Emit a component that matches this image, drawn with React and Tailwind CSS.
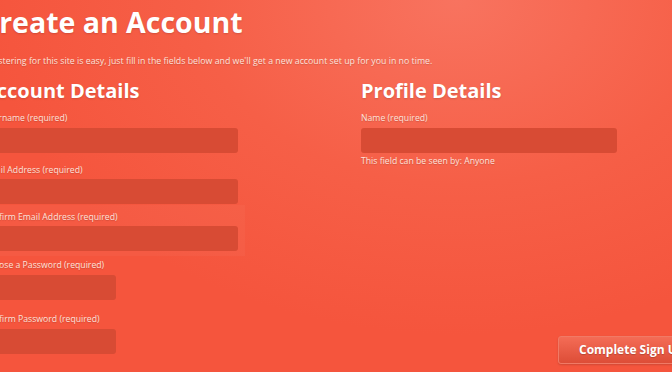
export default function App() {
  const label = "block text-[8.7px] leading-[12px] text-[#fde2dc] [text-shadow:0_1px_1px_rgba(0,0,0,0.15)]";
  const input = "h-[25px] rounded-[3px] bg-[#d84b34]";
  return (
    <div className="w-[672px] h-[372px] overflow-hidden bg-[radial-gradient(ellipse_70%_90%_at_68%_0%,#f8735f_0%,#f65f47_55%,#f5553d_100%)] font-['Open_Sans',sans-serif]">
      <div className="relative -ml-[19px] pt-[5px]">
        <h1 className="text-[28.5px] leading-[34px] font-bold text-white [text-shadow:0_1px_2px_rgba(0,0,0,0.15)]">Create an Account</h1>
        <p className="mt-[16px] text-[8.8px] leading-[12px] text-[#fde2dc] [text-shadow:0_1px_1px_rgba(0,0,0,0.15)]">
          Registering for this site is easy, just fill in the fields below and we'll get a new account set up for you in no time.
        </p>
        <div className="mt-[11px] flex">
          <div className="w-[380px] pl-[2px]">
            <h2 className="text-[20px] leading-[26px] font-bold text-white [text-shadow:0_1px_2px_rgba(0,0,0,0.15)]">Account Details</h2>
            <div className="w-[255px]">
              <label className={label + " mt-[8px]"}>Username (required)</label>
              <div className={input + " mt-[4px]"} />
              <label className={label + " mt-[11px]"}>Email Address (required)</label>
              <div className={input + " mt-[3px]"} />
              <div className="-mr-[7px] pr-[7px] mt-[1px] pt-[6px] pb-[5px] bg-white/[0.03]">
                <label className={label}>Confirm Email Address (required)</label>
                <div className={input + " mt-[3px]"} />
              </div>
              <label className={label + " mt-[3px]"}>Choose a Password (required)</label>
              <div className={input + " mt-[4px] w-[133px]"} />
              <label className={label + " mt-[13px]"}>Confirm Password (required)</label>
              <div className={input + " mt-[4px] w-[133px]"} />
            </div>
          </div>
          <div className="w-[256px]">
            <h2 className="text-[20px] leading-[26px] font-bold text-white [text-shadow:0_1px_2px_rgba(0,0,0,0.15)]">Profile Details</h2>
            <label className={label + " mt-[8px]"}>Name (required)</label>
            <div className={input + " mt-[4px]"} />
            <p className={label + " mt-[2px]"}>This field can be seen by: Anyone</p>
          </div>
        </div>
      </div>
      <div className="flex justify-start pl-[558px] mt-[-18px]">
        <button className="shrink-0 h-[28px] px-[20px] rounded-[3px] border border-[#f07a66] bg-[linear-gradient(#f46c56,#dd4d37)] text-[12px] font-bold text-white whitespace-nowrap shadow-[0_1px_2px_rgba(0,0,0,0.15)] [text-shadow:0_1px_1px_rgba(0,0,0,0.2)]">
          Complete Sign Up
        </button>
      </div>
    </div>
  );
}
